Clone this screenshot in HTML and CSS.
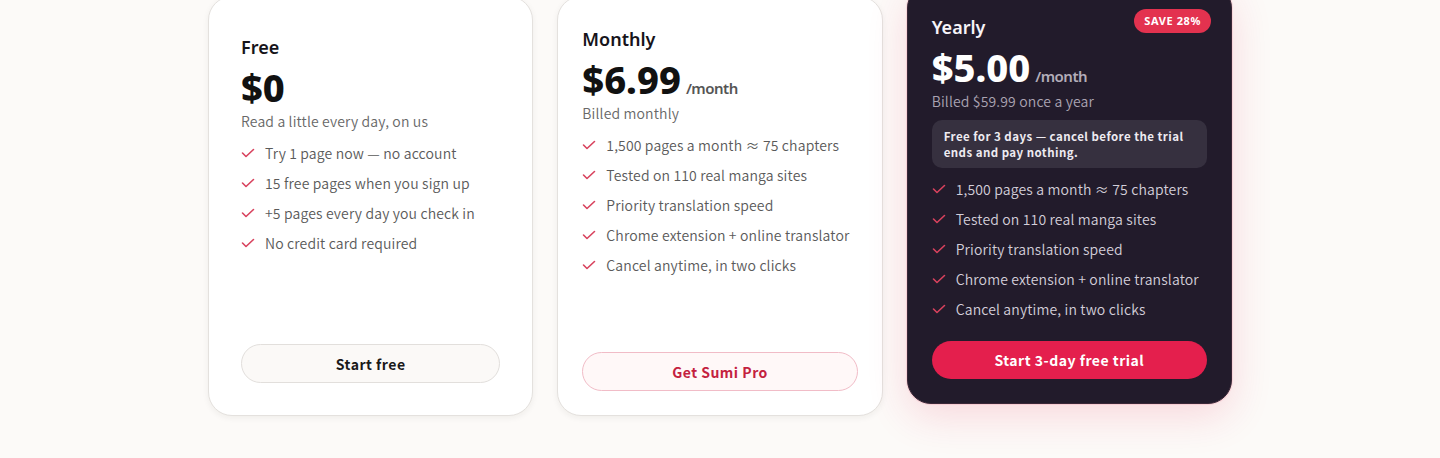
FILE: index.html
```html
<!DOCTYPE html>
<html lang="en">
<head>
<meta charset="utf-8">
<title>Pricing</title>
<link rel="stylesheet" href="styles.css">
</head>
<body>
<main class="pricing">
  <section class="card card-free">
    <h3 class="plan">Free</h3>
    <div class="price"><span class="amount">$0</span></div>
    <p class="sub">Read a little every day, on us</p>
    <ul class="features">
      <li><svg class="check" viewBox="0 0 14 10"><path d="M1.5 5l3.5 3.5L12.5 1.5"/></svg>Try 1 page now — no account</li>
      <li><svg class="check" viewBox="0 0 14 10"><path d="M1.5 5l3.5 3.5L12.5 1.5"/></svg>15 free pages when you sign up</li>
      <li><svg class="check" viewBox="0 0 14 10"><path d="M1.5 5l3.5 3.5L12.5 1.5"/></svg>+5 pages every day you check in</li>
      <li><svg class="check" viewBox="0 0 14 10"><path d="M1.5 5l3.5 3.5L12.5 1.5"/></svg>No credit card required</li>
    </ul>
    <button class="btn btn-plain">Start free</button>
  </section>

  <section class="card card-monthly">
    <h3 class="plan">Monthly</h3>
    <div class="price"><span class="amount">$6.99</span><span class="per">/month</span></div>
    <p class="sub">Billed monthly</p>
    <ul class="features">
      <li><svg class="check" viewBox="0 0 14 10"><path d="M1.5 5l3.5 3.5L12.5 1.5"/></svg>1,500 pages a month ≈ 75 chapters</li>
      <li><svg class="check" viewBox="0 0 14 10"><path d="M1.5 5l3.5 3.5L12.5 1.5"/></svg>Tested on 110 real manga sites</li>
      <li><svg class="check" viewBox="0 0 14 10"><path d="M1.5 5l3.5 3.5L12.5 1.5"/></svg>Priority translation speed</li>
      <li><svg class="check" viewBox="0 0 14 10"><path d="M1.5 5l3.5 3.5L12.5 1.5"/></svg>Chrome extension + online translator</li>
      <li><svg class="check" viewBox="0 0 14 10"><path d="M1.5 5l3.5 3.5L12.5 1.5"/></svg>Cancel anytime, in two clicks</li>
    </ul>
    <button class="btn btn-outline">Get Sumi Pro</button>
  </section>

  <section class="card card-yearly">
    <span class="badge">SAVE 28%</span>
    <h3 class="plan">Yearly</h3>
    <div class="price"><span class="amount">$5.00</span><span class="per">/month</span></div>
    <p class="sub">Billed $59.99 once a year</p>
    <p class="note">Free for 3 days — cancel before the trial ends and pay nothing.</p>
    <ul class="features">
      <li><svg class="check" viewBox="0 0 14 10"><path d="M1.5 5l3.5 3.5L12.5 1.5"/></svg>1,500 pages a month ≈ 75 chapters</li>
      <li><svg class="check" viewBox="0 0 14 10"><path d="M1.5 5l3.5 3.5L12.5 1.5"/></svg>Tested on 110 real manga sites</li>
      <li><svg class="check" viewBox="0 0 14 10"><path d="M1.5 5l3.5 3.5L12.5 1.5"/></svg>Priority translation speed</li>
      <li><svg class="check" viewBox="0 0 14 10"><path d="M1.5 5l3.5 3.5L12.5 1.5"/></svg>Chrome extension + online translator</li>
      <li><svg class="check" viewBox="0 0 14 10"><path d="M1.5 5l3.5 3.5L12.5 1.5"/></svg>Cancel anytime, in two clicks</li>
    </ul>
    <button class="btn btn-primary">Start 3-day free trial</button>
  </section>
</main>
</body>
</html>
```

FILE: styles.css
```css
* { box-sizing: border-box; }
html, body { margin: 0; padding: 0; }
body {
  background: #fcfaf8;
  font-family: "Noto Sans CJK JP", "Noto Sans", sans-serif;
  color: #1a1a1a;
  height: 458px;
  overflow: hidden;
}
.pricing {
  width: 1024px;
  margin: -4px auto 0;
  display: grid;
  grid-template-columns: repeat(3, 1fr);
  gap: 24px;
}
.card {
  position: relative;
  height: 420px;
  background: #ffffff;
  border: 1px solid #e4e1de;
  border-radius: 24px;
  padding: 24px;
  display: flex;
  flex-direction: column;
  box-shadow: 0 2px 6px rgba(40, 30, 20, 0.06);
}
.card-free { padding: 32px; }
.card-yearly {
  background: #221b2b;
  border-color: #3a2838;
  transform: translateY(-12px);
  box-shadow: 0 12px 40px rgba(230, 40, 80, 0.16), 0 0 0 1px rgba(230, 60, 90, 0.12);
}
.plan {
  margin: 0;
  font-family: "Noto Sans", sans-serif;
  font-size: 18px;
  font-weight: 600;
  line-height: 36px;
  color: #16141a;
}
.price {
  display: flex;
  align-items: baseline;
  height: 45px;
  padding-top: 3px;
}
.amount {
  font-family: "Noto Sans", sans-serif;
  font-size: 38px;
  font-weight: 800;
  line-height: 38px;
  color: #111;
}
.per {
  margin-left: 5px;
  font-family: "Noto Sans", sans-serif;
  font-size: 15px;
  font-weight: 600;
  line-height: 20px;
  color: #555;
  letter-spacing: -0.5px;
}
.sub {
  margin: 0;
  font-size: 14px;
  font-weight: 350;
  letter-spacing: 0.15px;
  line-height: 22px;
  color: #686868;
}
.features {
  list-style: none;
  margin: 10px 0 0;
  padding: 0;
  display: flex;
  flex-direction: column;
  gap: 8px;
  flex: 1;
}
.features li {
  display: flex;
  align-items: center;
  gap: 10px;
  font-size: 14px;
  font-weight: 350;
  letter-spacing: 0.15px;
  line-height: 22px;
  color: #5a5a5a;
}
.check {
  width: 14px;
  height: 10px;
  flex: none;
  fill: none;
  stroke: #d8425d;
  stroke-width: 1.6;
  stroke-linecap: round;
  stroke-linejoin: round;
}
.btn {
  height: 39px;
  border-radius: 999px;
  font-family: "Noto Sans CJK JP", "Noto Sans", sans-serif;
  font-size: 14px;
  font-weight: 700;
  letter-spacing: 0.5px;
  cursor: pointer;
}
.btn-plain {
  background: #fbf9f7;
  border: 1px solid #e2dfdc;
  color: #1a1a1a;
}
.btn-outline {
  background: #fff8f8;
  border: 1px solid #f1bcc7;
  color: #c4213f;
}
.btn-primary {
  height: 38px;
  background: #e41f4d;
  border: none;
  color: #ffffff;
}
.card-yearly .plan { color: #f6f3f8; }
.card-yearly .amount { color: #ffffff; }
.card-yearly .per { color: #b3adb9; }
.card-yearly .sub { color: #aaa3b2; }
.card-yearly .features li { color: #d3ced9; }
.note {
  margin: 8px 0 0;
  padding: 8px 12px;
  background: #36303f;
  border-radius: 10px;
  font-size: 11.5px;
  font-weight: 700;
  line-height: 16px;
  color: #eeebf1;
  letter-spacing: 0.45px;
}
.badge {
  position: absolute;
  top: 24px;
  right: 20px;
  height: 24px;
  padding: 0 10px;
  border-radius: 999px;
  background: #e3324f;
  color: #fff;
  font-family: "Noto Sans", sans-serif;
  font-size: 11px;
  font-weight: 700;
  letter-spacing: 0.6px;
  line-height: 24px;
}
```
